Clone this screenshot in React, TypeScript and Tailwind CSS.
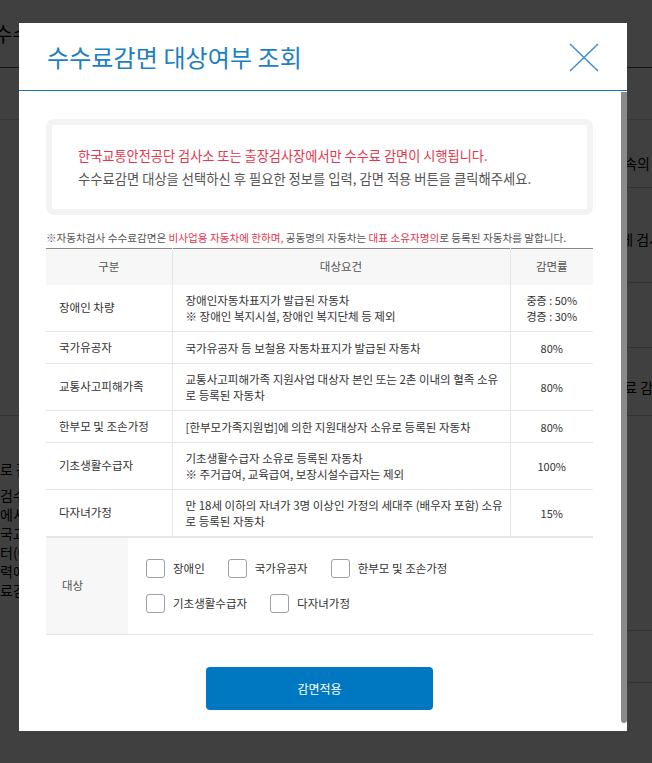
import React from "react";

const rows: { name: string; lines: string[]; rate: string[]; h: string }[] = [
  { name: "장애인 차량", lines: ["장애인자동차표지가 발급된 자동차", "※ 장애인 복지시설, 장애인 복지단체 등 제외"], rate: ["중증 : 50%", "경증 : 30%"], h: "h-[47px]" },
  { name: "국가유공자", lines: ["국가유공자 등 보철용 자동차표지가 발급된 자동차"], rate: ["80%"], h: "h-[32px]" },
  { name: "교통사고피해가족", lines: ["교통사고피해가족 지원사업 대상자 본인 또는 2촌 이내의 혈족 소유", "로 등록된 자동차"], rate: ["80%"], h: "h-[47px]" },
  { name: "한부모 및 조손가정", lines: ["[한부모가족지원법]에 의한 지원대상자 소유로 등록된 자동차"], rate: ["80%"], h: "h-[32px]" },
  { name: "기초생활수급자", lines: ["기초생활수급자 소유로 등록된 자동차", "※ 주거급여, 교육급여, 보장시설수급자는 제외"], rate: ["100%"], h: "h-[47px]" },
  { name: "다자녀가정", lines: ["만 18세 이하의 자녀가 3명 이상인 가정의 세대주 (배우자 포함) 소유", "로 등록된 자동차"], rate: ["15%"], h: "h-[47px]" },
];

function Check({ label }: { label: string }) {
  return (
    <div className="flex items-center gap-[8px]">
      <span className="block h-[19px] w-[19px] rounded-[3px] border border-[#a0a0a0] bg-white" />
      <span className="text-[11.5px] text-[#333]">{label}</span>
    </div>
  );
}

export default function App() {
  return (
    <div className="relative h-[763px] w-[652px] overflow-hidden bg-white font-['Noto_Sans_CJK_KR','Noto_Sans',sans-serif] text-black">
      {/* underlying page */}
      <div className="flex flex-col">
        <div className="ml-[-6px] flex h-[68px] items-center border-b border-[#555] text-[20px] whitespace-nowrap">
          수수료감면 대상여부 조회
        </div>
        <div className="h-[52px] border-b border-[#ddd]" />
        <div className="flex h-[295px]">
          <div className="w-[320px]" />
          <div className="flex flex-1 flex-col text-[14px]">
            <div className="flex h-[68px] items-end justify-end border-b border-[#ccc] pb-[13px] whitespace-nowrap">
              <span className="mr-[2px]">소속의</span>
            </div>
            <div className="flex h-[95px] items-start justify-end border-b border-[#ccc] pt-[41px] whitespace-nowrap">
              <span className="mr-[-10px]">에게 검사</span>
            </div>
            <div className="h-[65px] border-b border-[#ccc]" />
            <div className="flex h-[67px] items-center justify-end pt-[12px] whitespace-nowrap">
              <span className="mr-[-14px]">수수료 감면</span>
            </div>
          </div>
        </div>
        <div className="border-t border-[#ccc]" />
        <div className="flex flex-col pt-[44px] text-[14px] leading-[19px] whitespace-nowrap">
          <div className="mb-[7px]">로 감면</div>
          <div>검수수료</div>
          <div>에서만</div>
          <div>국교통안전</div>
          <div>터(여</div>
          <div>력에</div>
          <div>료감면</div>
        </div>
        <div className="mt-[30px] flex">
          <div className="w-[320px]" />
          <div className="h-[53px] flex-1 border-y border-[#ccc]" />
        </div>
      </div>

      {/* dim overlay */}
      <div className="absolute inset-0 bg-black/75" />

      {/* modal */}
      <div className="absolute left-[19px] top-[23px] flex h-[708px] w-[608px] flex-col bg-white">
        <div className="flex h-[68px] shrink-0 items-center justify-between border-b border-[#1f74b5] pl-[28px] pr-[28px]">
          <h1 className="text-[24px] font-normal tracking-[0.1px] text-[#1c7fc2]">수수료감면 대상여부 조회</h1>
          <svg width="30" height="29" viewBox="0 0 30 29" className="mt-[2px]">
            <path d="M1 1 L29 28 M29 1 L1 28" stroke="#3d8fcf" strokeWidth="1.5" fill="none" />
          </svg>
        </div>

        <div className="relative flex-1 pl-[27px] pr-[34px] pt-[28px]">
          {/* scrollbar thumb */}
          <div className="absolute right-0 top-[1px] h-[631px] w-[6px] rounded-b-[3px] bg-[#8a8a8a]" />

          <div className="flex h-[96px] flex-col justify-center rounded-[8px] border-[6px] border-[#f3f3f3] pl-[26px]">
            <p className="text-[13.2px] leading-[23px] whitespace-nowrap text-[#e5364e]">
              한국교통안전공단 검사소 또는 출장검사장에서만 수수료 감면이 시행됩니다.
            </p>
            <p className="text-[13.3px] leading-[23px] whitespace-nowrap text-[#555]">
              수수료감면 대상을 선택하신 후 필요한 정보를 입력, 감면 적용 버튼을 클릭해주세요.
            </p>
          </div>

          <p className="mt-[16px] text-[10.6px] leading-[14px] whitespace-nowrap text-[#555]">
            ※자동차검사 수수료감면은 <span className="text-[#e5364e]">비사업용 자동차에 한하며,</span> 공동명의 자동차는{" "}
            <span className="text-[#e5364e]">대표 소유자명의</span>로 등록된 자동차를 말합니다.
          </p>

          <table className="mt-[3px] w-[547px] table-fixed border-collapse border-t border-[#8a8a8a] text-[11.5px] text-[#333]">
            <colgroup>
              <col className="w-[126px]" />
              <col className="w-[338px]" />
              <col className="w-[83px]" />
            </colgroup>
            <thead>
              <tr className="h-[36px] bg-[#f7f7f7] text-[11.5px] text-[#555]">
                <th className="border-r border-[#e5e5e5] font-normal">구분</th>
                <th className="border-r border-[#e5e5e5] font-normal">대상요건</th>
                <th className="font-normal">감면률</th>
              </tr>
            </thead>
            <tbody>
              {rows.map((r) => (
                <tr key={r.name} className={`${r.h} border-b border-[#e6e6e6]`}>
                  <td className="border-r border-[#e6e6e6] pl-[13px] whitespace-nowrap">{r.name}</td>
                  <td className="border-r border-[#e6e6e6] pl-[13px] leading-[16px] whitespace-nowrap">
                    {r.lines.map((l) => (
                      <div key={l}>{l}</div>
                    ))}
                  </td>
                  <td className="text-center text-[11px] leading-[16px] whitespace-nowrap">
                    {r.rate.map((l) => (
                      <div key={l}>{l}</div>
                    ))}
                  </td>
                </tr>
              ))}
            </tbody>
          </table>

          <div className="flex h-[98px] w-[547px] border-y border-[#e6e6e6]">
            <div className="flex w-[82px] items-center bg-[#f7f7f7] pl-[16px] text-[11.5px] text-[#555]">대상</div>
            <div className="flex flex-col justify-center gap-[16px] pl-[18px]">
              <div className="flex items-center gap-[23px]">
                <Check label="장애인" />
                <Check label="국가유공자" />
                <Check label="한부모 및 조손가정" />
              </div>
              <div className="flex items-center gap-[23px]">
                <Check label="기초생활수급자" />
                <Check label="다자녀가정" />
              </div>
            </div>
          </div>

          <div className="mt-[32px] flex w-[547px] justify-center">
            <button className="h-[43px] w-[227px] rounded-[4px] bg-[#0078c1] text-[12px] text-white">감면적용</button>
          </div>
        </div>
      </div>
    </div>
  );
}
